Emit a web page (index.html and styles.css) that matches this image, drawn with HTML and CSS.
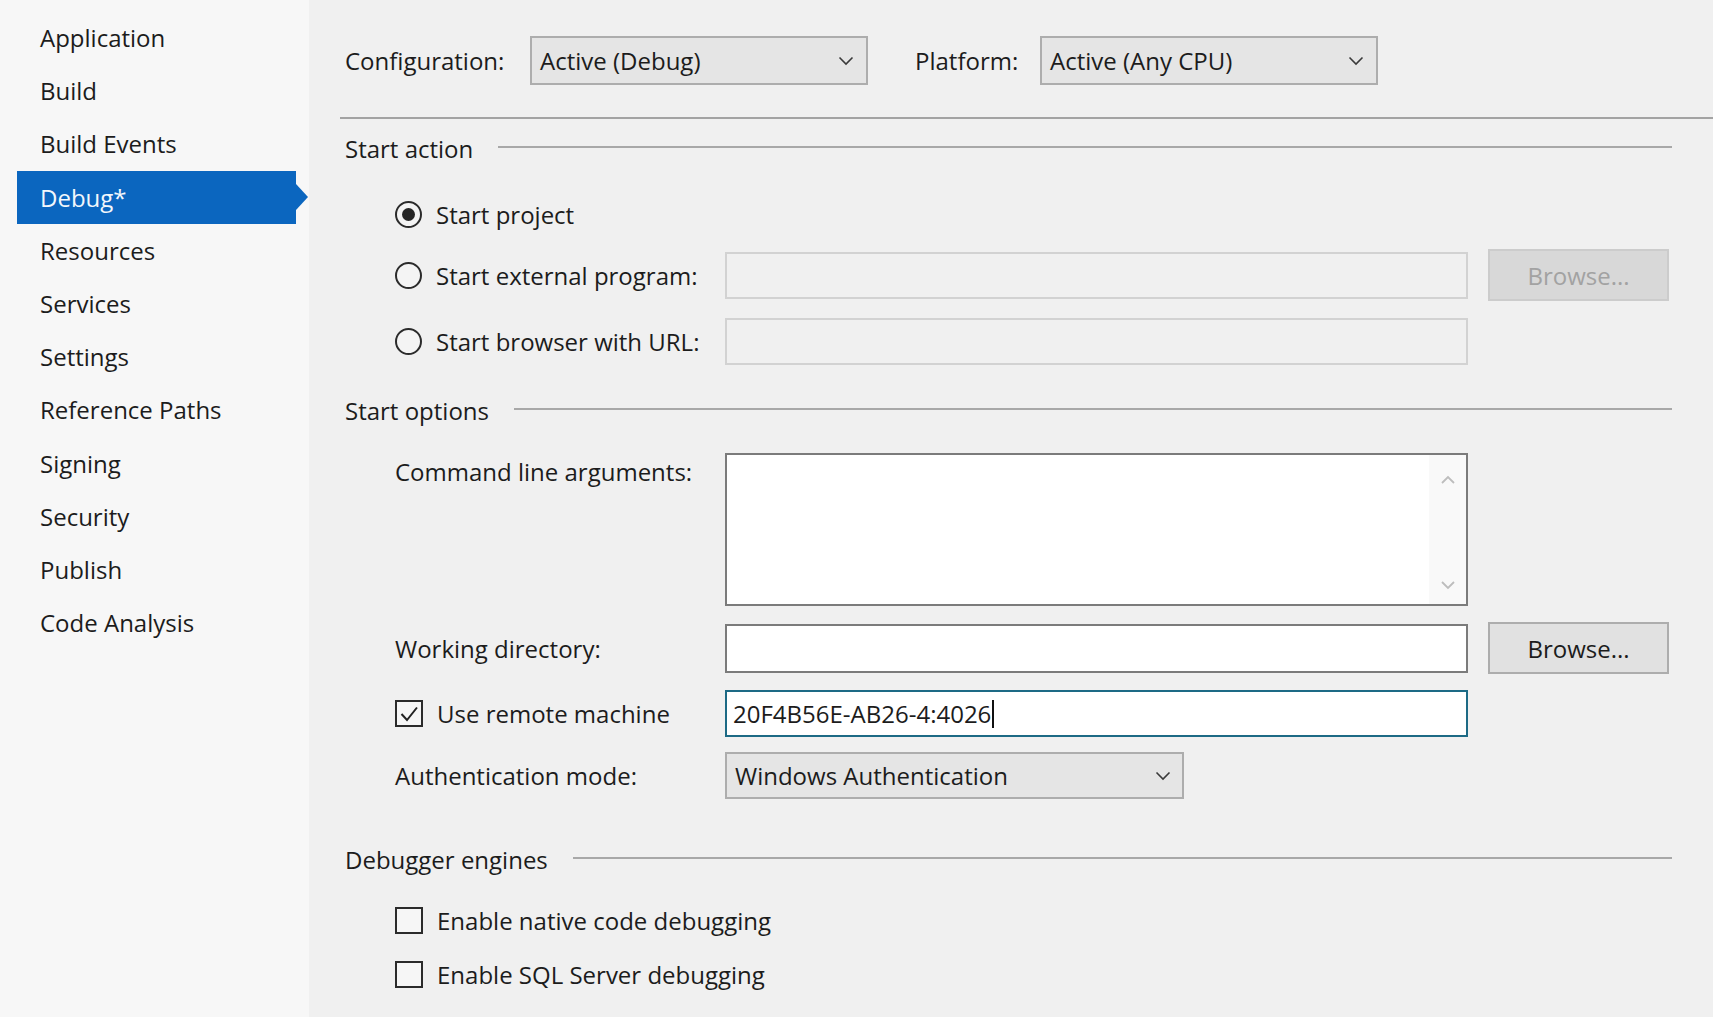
FILE: index.html
```html
<!DOCTYPE html>
<html lang="en">
<head>
<meta charset="utf-8">
<title>Debug Properties</title>
<link rel="stylesheet" href="styles.css">
</head>
<body>
<div class="app">
  <nav class="sidebar">
    <div class="nav-item">Application</div>
    <div class="nav-item">Build</div>
    <div class="nav-item">Build Events</div>
    <div class="nav-item active">Debug*</div>
    <div class="nav-item">Resources</div>
    <div class="nav-item">Services</div>
    <div class="nav-item">Settings</div>
    <div class="nav-item">Reference Paths</div>
    <div class="nav-item">Signing</div>
    <div class="nav-item">Security</div>
    <div class="nav-item">Publish</div>
    <div class="nav-item">Code Analysis</div>
  </nav>
  <main class="main">
    <div class="toolbar">
      <span class="tb-label tb-config">Configuration:</span>
      <div class="select select-config">
        <span>Active (Debug)</span>
        <svg class="chev" width="16" height="10" viewBox="0 0 16 10"><polyline points="1.5,1.5 8,8 14.5,1.5" fill="none" stroke="#3a3a3a" stroke-width="1.6"/></svg>
      </div>
      <span class="tb-label tb-platform">Platform:</span>
      <div class="select select-platform">
        <span>Active (Any CPU)</span>
        <svg class="chev" width="16" height="10" viewBox="0 0 16 10"><polyline points="1.5,1.5 8,8 14.5,1.5" fill="none" stroke="#3a3a3a" stroke-width="1.6"/></svg>
      </div>
    </div>
    <div class="top-sep"></div>

    <div class="content">
      <div class="section-head head-action"><span>Start action</span><span class="rule"></span></div>

      <div class="row row-project">
        <label class="opt"><span class="radio checked"></span>Start project</label>
      </div>
      <div class="row row-ext">
        <label class="opt label-col"><span class="radio"></span>Start external program:</label>
        <div class="field field-disabled"></div>
        <div class="btn btn-disabled">Browse...</div>
      </div>
      <div class="row row-url">
        <label class="opt label-col"><span class="radio"></span>Start browser with URL:</label>
        <div class="field field-disabled"></div>
      </div>

      <div class="section-head head-options"><span>Start options</span><span class="rule"></span></div>

      <div class="row row-cmd">
        <span class="label-col cmd-label">Command line arguments:</span>
        <div class="textarea">
          <div class="scrollbar">
            <svg width="16" height="10" viewBox="0 0 16 10"><polyline points="2,8 8,2 14,8" fill="none" stroke="#bdbdbd" stroke-width="1.8"/></svg>
            <svg width="16" height="10" viewBox="0 0 16 10"><polyline points="2,2 8,8 14,2" fill="none" stroke="#bdbdbd" stroke-width="1.8"/></svg>
          </div>
        </div>
      </div>
      <div class="row row-wd">
        <span class="label-col">Working directory:</span>
        <div class="field field-white"></div>
        <div class="btn">Browse...</div>
      </div>
      <div class="row row-remote">
        <label class="opt label-col"><span class="check checked"><svg width="20" height="18" viewBox="0 0 20 18"><polyline points="2.5,9 8,15 18,2.5" fill="none" stroke="#222" stroke-width="2"/></svg></span>Use remote machine</label>
        <div class="field field-focus"><span class="val">20F4B56E-AB26-4:4026</span><span class="caret"></span></div>
      </div>
      <div class="row row-auth">
        <span class="label-col">Authentication mode:</span>
        <div class="select select-auth">
          <span>Windows Authentication</span>
          <svg class="chev" width="16" height="10" viewBox="0 0 16 10"><polyline points="1.5,1.5 8,8 14.5,1.5" fill="none" stroke="#3a3a3a" stroke-width="1.6"/></svg>
        </div>
      </div>

      <div class="section-head head-engines"><span>Debugger engines</span><span class="rule"></span></div>

      <div class="row row-cb1">
        <label class="opt"><span class="check"></span>Enable native code debugging</label>
      </div>
      <div class="row row-cb2">
        <label class="opt"><span class="check"></span>Enable SQL Server debugging</label>
      </div>
    </div>
  </main>
</div>
</body>
</html>
```

FILE: styles.css
```css
* { box-sizing: border-box; }

html, body {
  margin: 0;
  padding: 0;
}

body {
  font-family: "Open Sans", "Noto Sans", sans-serif;
  font-size: 24px;
  color: #1c1c1c;
  background: #f0f0f0;
}

.app {
  display: flex;
  width: 1713px;
  height: 1017px;
  overflow: hidden;
}

/* ---------- Sidebar ---------- */
.sidebar {
  width: 309px;
  flex: none;
  background: #f7f7f7;
  padding-top: 11px;
}

.nav-item {
  height: 53.2px;
  display: flex;
  align-items: center;
  padding-left: 40px;
  white-space: nowrap;
}

.nav-item.active {
  position: relative;
  margin-left: 17px;
  width: 279px;
  padding-left: 23px;
  background: #0b66bf;
  color: #f2f7fc;
}

.nav-item.active::after {
  content: "";
  position: absolute;
  right: -12px;
  top: 50%;
  margin-top: -13px;
  border-top: 13px solid transparent;
  border-bottom: 13px solid transparent;
  border-left: 12px solid #0b66bf;
}

/* ---------- Main ---------- */
.main {
  flex: 1;
  background: #f0f0f0;
  padding-top: 36px;
}

.toolbar {
  display: flex;
  align-items: center;
  padding-left: 36px;
  height: 49px;
}

.tb-label { white-space: nowrap; }
.tb-config { width: 185px; }
.tb-platform { width: 125px; margin-left: 47px; }

.select {
  display: flex;
  align-items: center;
  justify-content: space-between;
  height: 49px;
  background: #e5e5e5;
  border: 2px solid #adadad;
  padding-left: 8px;
  padding-right: 12px;
  white-space: nowrap;
}

.select-config { width: 338px; }
.select-platform { width: 338px; }
.select-auth { width: 459px; height: 47px; padding-right: 11px; }

.top-sep {
  margin-top: 32px;
  margin-left: 31px;
  height: 2px;
  background: #a3a3a3;
}

.content {
  padding-left: 36px;
  padding-right: 41px;
}

.section-head {
  display: flex;
  align-items: center;
  height: 30px;
  white-space: nowrap;
}

.section-head .rule {
  flex: 1;
  height: 2px;
  margin-left: 25px;
  margin-top: -2px;
  background: #a8a8a8;
}

.head-action { margin-top: 14px; }
.head-options { margin-top: 30px; }
.head-engines { margin-top: 45px; }

.row {
  display: flex;
  align-items: center;
  padding-left: 50px;
}

.row-project { margin-top: 31px; height: 40px; }
.row-ext { margin-top: 15px; height: 52px; }
.row-url { margin-top: 17px; height: 47px; }
.row-cmd { margin-top: 28px; align-items: flex-start; }
.row-wd { margin-top: 16px; height: 52px; }
.row-remote { margin-top: 16px; height: 47px; }
.row-auth { margin-top: 15px; height: 47px; }
.row-cb1 { margin-top: 31px; height: 30px; }
.row-cb2 { margin-top: 24px; height: 30px; }

.label-col {
  width: 330px;
  flex: none;
  white-space: nowrap;
}

.cmd-label {
  margin-top: 4px;
  line-height: 30px;
}

.opt {
  display: flex;
  align-items: center;
  white-space: nowrap;
}

.radio {
  width: 27px;
  height: 27px;
  border-radius: 50%;
  border: 2px solid #2b2b2b;
  margin-right: 14px;
  flex: none;
  display: flex;
  align-items: center;
  justify-content: center;
  background: #f4f4f4;
}

.radio.checked::after {
  content: "";
  width: 13px;
  height: 13px;
  border-radius: 50%;
  background: #262626;
}

.check {
  width: 28px;
  height: 27px;
  border: 2px solid #2b2b2b;
  margin-right: 14px;
  flex: none;
  display: flex;
  align-items: center;
  justify-content: center;
  background: #f6f6f6;
}

.field {
  width: 743px;
  height: 47px;
  flex: none;
  display: flex;
  align-items: center;
}

.field-disabled {
  background: #f0f0f0;
  border: 2px solid #d2d2d2;
}

.field-white {
  height: 49px;
  background: #ffffff;
  border: 2px solid #7b7b7b;
}

.field-focus {
  background: #ffffff;
  border: 2px solid #1d6a85;
  padding-left: 6px;
}

.caret {
  width: 2px;
  height: 28px;
  background: #111;
  margin-left: 1px;
}

.textarea {
  width: 743px;
  height: 153px;
  flex: none;
  background: #ffffff;
  border: 2px solid #7b7b7b;
  display: flex;
  justify-content: flex-end;
}

.scrollbar {
  width: 37px;
  background: #f9f9f9;
  display: flex;
  flex-direction: column;
  align-items: center;
  justify-content: space-between;
  padding: 20px 0 14px;
}

.btn {
  width: 181px;
  height: 52px;
  margin-left: 20px;
  flex: none;
  display: flex;
  align-items: center;
  justify-content: center;
  background: #e1e1e1;
  border: 2px solid #adadad;
}

.btn-disabled {
  background: #d8d8d8;
  border-color: #cccccc;
  color: #a2a2a2;
}
```
